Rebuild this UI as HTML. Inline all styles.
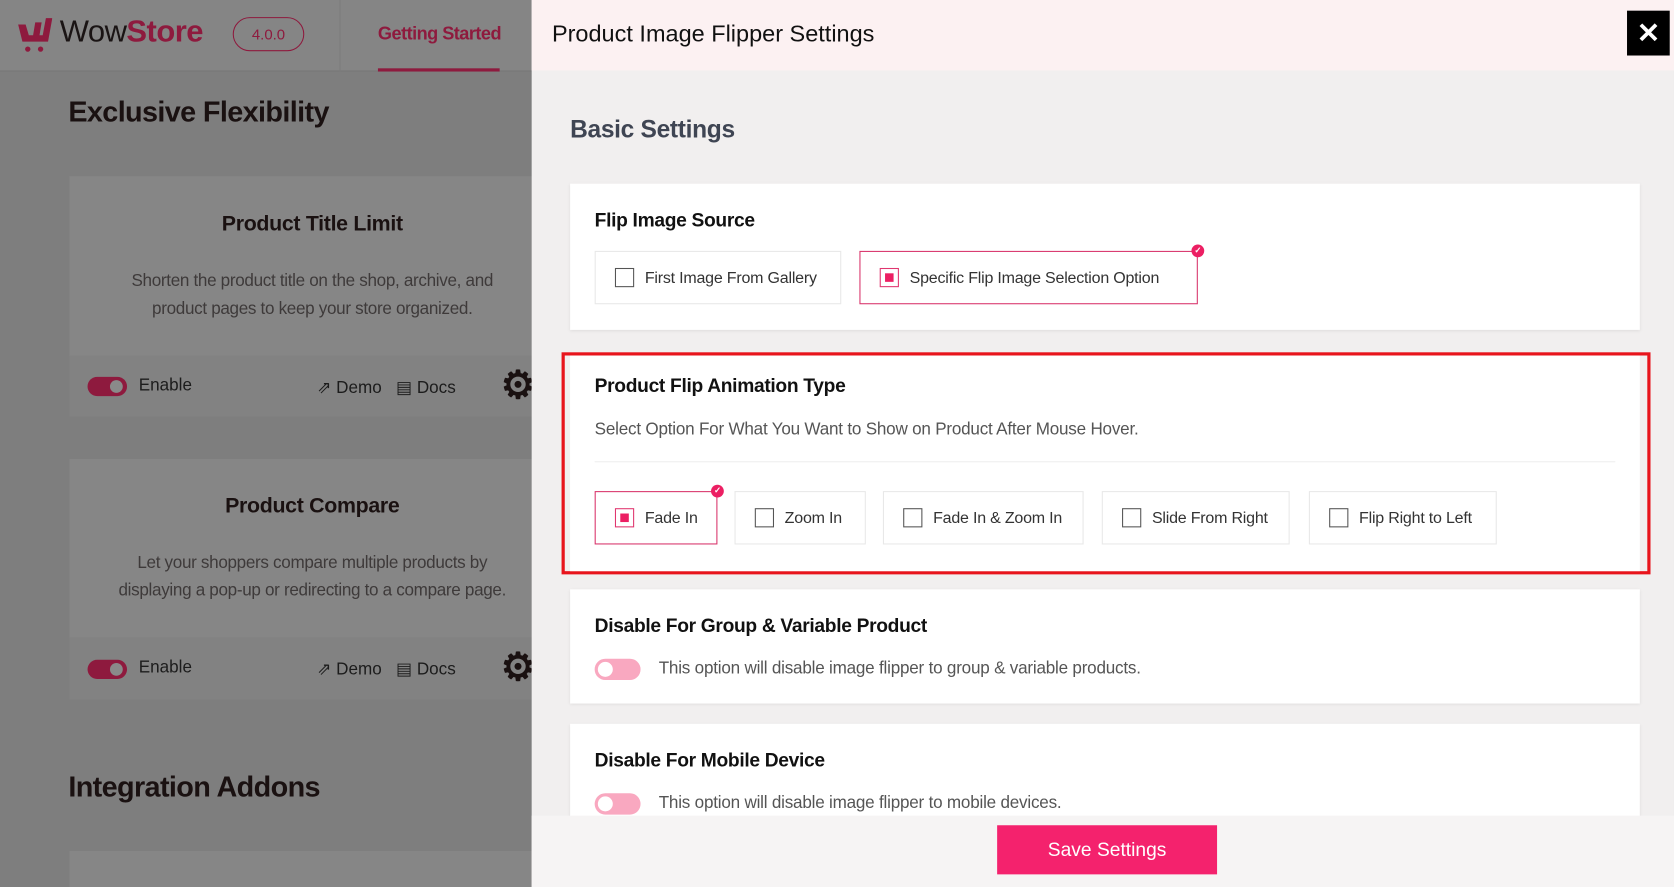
<!DOCTYPE html>
<html><head><meta charset="utf-8"><style>
*{box-sizing:border-box;margin:0;padding:0}
html,body{width:1674px;height:887px;overflow:hidden;background:#7e7e7e}
#s{position:absolute;left:0;top:0;width:1568px;height:831px;transform:scale(1.06760);transform-origin:0 0;font-family:"Liberation Sans",sans-serif}
.a{position:absolute}
.hd{left:0;top:0;width:498px;height:67px;background:#858585;border-bottom:1px solid #777}
.lc{background:#868686;left:65px;width:440px}
.lt{width:100%;text-align:center;font-weight:bold;font-size:20px;color:#1a1111;letter-spacing:-0.3px}
.ld{width:100%;text-align:center;font-size:16px;line-height:26px;color:#3e3a3a;letter-spacing:-0.3px}
.tg{width:37px;height:18px;border-radius:9px;background:#8e1a3e}
.tg::after{content:"";position:absolute;right:4px;top:3px;width:12px;height:12px;border-radius:50%;background:#8a8a8a}
.card{background:#fff;left:534px;width:1002px;box-shadow:0 1px 3px rgba(0,0,0,.08)}
.h{font-weight:bold;font-size:18px;color:#111;left:23px;letter-spacing:-0.3px}
.op{border:1px solid #e8e8e8;height:50px;top:288px;font-size:15px;color:#333;display:flex;align-items:center;padding-left:18px;background:#fff;letter-spacing:-0.2px}
.op i{display:inline-block;width:18px;height:18px;border:1px solid #555;margin-right:10px}
.op.on{border-color:#d9346b}
.op.on i{border-color:#e0366f;position:relative}
.op.on i::after{content:"";position:absolute;left:4px;top:4px;width:8px;height:8px;background:#ec1f63}
.op.on b{position:absolute;right:-7px;top:-7px;width:12px;height:12px;border-radius:50%;background:#ec1f63;color:#fff;font-size:8px;line-height:12px;text-align:center}
.sw{width:43px;height:20px;border-radius:10px;background:#f9a8c0}
.sw::after{content:"";position:absolute;left:3px;top:3px;width:14px;height:14px;border-radius:50%;background:#fff}
.sd{font-size:16px;color:#555;letter-spacing:-0.2px}
.gear{font-size:36px;color:#1a1111;font-weight:bold}
</style></head><body><div id="s">
<div class="a hd"></div>
<svg class="a" style="left:15px;top:15px" width="34" height="36" viewBox="0 0 34 36"><path d="M2 8 L6 24 L30 24 L34 2 L28 2 L25 18 L22 18 L24 6 L18 6 L16 18 L12 18 L9 8 Z" fill="#8e1a3e"/><circle cx="11" cy="31" r="2.5" fill="#8e1a3e"/><circle cx="23" cy="31" r="2.5" fill="#8e1a3e"/></svg>
<div class="a" style="left:56px;top:14px;font-size:29px;color:#1a1414;letter-spacing:-0.5px">Wow<b style="color:#8e1a3e">Store</b></div>
<div class="a" style="left:218px;top:16px;width:67px;height:32px;border:1px solid #8e1a3e;border-radius:16px;font-size:14px;color:#8e1a3e;text-align:center;line-height:30px">4.0.0</div>
<div class="a" style="left:318px;top:0;width:1px;height:67px;background:#7c7c7c"></div>
<div class="a" style="left:354px;top:22px;font-size:17px;font-weight:bold;color:#8e1a3e;letter-spacing:-0.5px">Getting Started</div>
<div class="a" style="left:354px;top:64px;width:114px;height:3px;background:#8e1a3e"></div>
<div class="a" style="left:64px;top:90px;font-size:27px;font-weight:bold;color:#1a1111;letter-spacing:-0.6px">Exclusive Flexibility</div>
<div class="a lc" style="top:165px;height:225px"></div>
<div class="a lc" style="top:333px;height:57px;background:#828282"></div>
<div class="a lt" style="left:65px;width:455px;top:199px">Product Title Limit</div>
<div class="a ld" style="left:65px;width:455px;top:251px">Shorten the product title on the shop, archive, and<br>product pages to keep your store organized.</div>
<div class="a tg" style="left:82px;top:353px"></div>
<div class="a" style="left:130px;top:353px;font-size:16px;color:#1c1c1c">Enable</div>
<div class="a" style="left:297px;top:353px;font-size:16px;color:#1c1c1c">⇗ Demo &nbsp;&nbsp;▤ Docs</div>
<div class="a gear" style="left:469px;top:340px">⚙</div>
<div class="a lc" style="top:430px;height:225px"></div>
<div class="a lc" style="top:597px;height:58px;background:#828282"></div>
<div class="a lt" style="left:65px;width:455px;top:463px">Product Compare</div>
<div class="a ld" style="left:65px;width:455px;top:515px">Let your shoppers compare multiple products by<br>displaying a pop-up or redirecting to a compare page.</div>
<div class="a tg" style="left:82px;top:618px"></div>
<div class="a" style="left:130px;top:617px;font-size:16px;color:#1c1c1c">Enable</div>
<div class="a" style="left:297px;top:617px;font-size:16px;color:#1c1c1c">⇗ Demo &nbsp;&nbsp;▤ Docs</div>
<div class="a gear" style="left:469px;top:604px">⚙</div>
<div class="a" style="left:64px;top:722px;font-size:27px;font-weight:bold;color:#1a1111;letter-spacing:-0.6px">Integration Addons</div>
<div class="a lc" style="top:797px;height:34px"></div>

<div class="a" style="left:498px;top:0;width:1070px;height:831px;background:#f1efef"></div>
<div class="a" style="left:498px;top:0;width:1070px;height:66px;background:#fcf1f2"></div>
<div class="a" style="left:517px;top:19px;font-size:22px;color:#111">Product Image Flipper Settings</div>
<div class="a" style="left:1524px;top:10px;width:40px;height:42px;background:#000;color:#fff;font-size:26px;font-weight:bold;text-align:center;line-height:42px">✕</div>
<div class="a" style="left:534px;top:108px;font-size:23px;font-weight:bold;color:#3f4553;letter-spacing:-0.3px">Basic Settings</div>

<div class="a card" style="top:172px;height:137px">
<div class="a h" style="top:24px">Flip Image Source</div>
<div class="a op" style="left:23px;top:63px;width:231px"><i></i>First Image From Gallery</div>
<div class="a op on" style="left:271px;top:63px;width:317px"><i></i>Specific Flip Image Selection Option<b>✓</b></div>
</div>

<div class="a" style="left:526px;top:330px;width:1020px;height:208px;border:3px solid #e8141c"></div>
<div class="a card" style="top:333px;height:202px;width:1002px;box-shadow:none">
<div class="a h" style="top:18px">Product Flip Animation Type</div>
<div class="a sd" style="left:23px;top:61px">Select Option For What You Want to Show on Product After Mouse Hover.</div>
<div class="a" style="left:23px;top:99px;width:956px;height:1px;background:#eee"></div>
<div class="a op on" style="left:23px;top:127px;width:115px"><i></i>Fade In<b>✓</b></div>
<div class="a op" style="left:154px;top:127px;width:123px"><i></i>Zoom In</div>
<div class="a op" style="left:293px;top:127px;width:188px"><i></i>Fade In &amp; Zoom In</div>
<div class="a op" style="left:498px;top:127px;width:176px"><i></i>Slide From Right</div>
<div class="a op" style="left:692px;top:127px;width:176px"><i></i>Flip Right to Left</div>
</div>

<div class="a card" style="top:552px;height:107px">
<div class="a h" style="top:24px">Disable For Group &amp; Variable Product</div>
<div class="a sw" style="left:23px;top:65px"></div>
<div class="a sd" style="left:83px;top:66px">This option will disable image flipper to group &amp; variable products.</div>
</div>
<div class="a card" style="top:678px;height:90px">
<div class="a h" style="top:24px">Disable For Mobile Device</div>
<div class="a sw" style="left:23px;top:65px"></div>
<div class="a sd" style="left:83px;top:66px">This option will disable image flipper to mobile devices.</div>
</div>
<div class="a" style="left:498px;top:764px;width:1070px;height:67px;background:#f6f4f4"></div>
<div class="a" style="left:934px;top:773px;width:206px;height:46px;background:#f4226d;color:#fff;font-size:18px;text-align:center;line-height:46px">Save Settings</div>
</div></body></html>
